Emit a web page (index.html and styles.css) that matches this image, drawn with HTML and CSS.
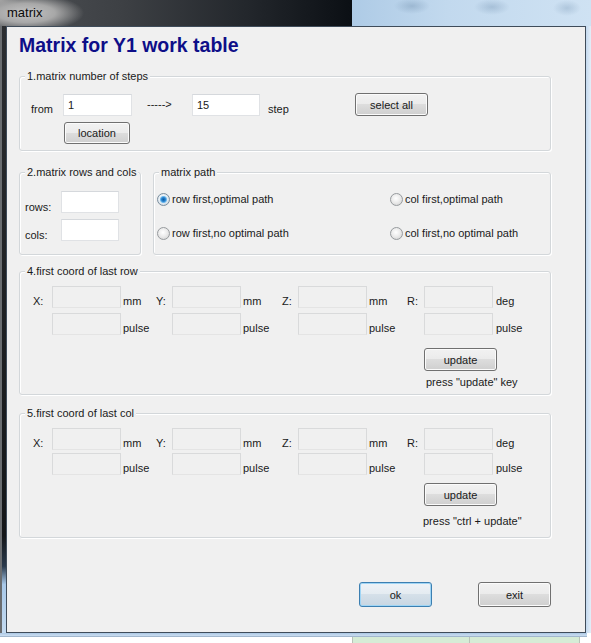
FILE: index.html
```html
<!DOCTYPE html>
<html>
<head>
<meta charset="utf-8">
<title>matrix</title>
<link rel="stylesheet" href="styles.css">
</head>
<body>
<div class="screen">
  <div class="titlebar">
    <div class="glass"><span class="caption">matrix</span></div>
    <div class="desk-top"></div>
  </div>
  <div class="mid">
    <div class="frame-left"></div>
    <div class="client">
      <h1 class="heading">Matrix for Y1 work table</h1>

      <section class="group g-steps">
        <div class="group-title">1.matrix number of steps</div>
        <div class="steps-row">
          <span class="lbl lbl-from">from</span>
          <input class="edit edit-from" value="1">
          <span class="lbl lbl-arrow">-----&gt;</span>
          <input class="edit edit-to" value="15">
          <span class="lbl lbl-step">step</span>
          <button class="btn btn-select">select all</button>
        </div>
        <button class="btn btn-location">location</button>
      </section>

      <div class="group-pair">
        <section class="group g-rc">
          <div class="group-title">2.matrix rows and cols</div>
          <div class="rc-row"><span class="lbl lbl-rc">rows:</span><input class="edit edit-rc"></div>
          <div class="rc-row"><span class="lbl lbl-rc">cols:</span><input class="edit edit-rc"></div>
        </section>
        <section class="group g-path">
          <div class="group-title">matrix path</div>
          <div class="radios">
            <label class="radio-item"><span class="radio on"></span>row first,optimal path</label>
            <label class="radio-item"><span class="radio"></span>col first,optimal path</label>
            <label class="radio-item"><span class="radio"></span>row first,no optimal path</label>
            <label class="radio-item"><span class="radio"></span>col first,no optimal path</label>
          </div>
        </section>
      </div>

      <section class="group g-coord">
        <div class="group-title">4.first coord of last row</div>
        <div class="coord-grid">
          <span class="lbl">X:</span><input class="edit" disabled><span class="lbl unit">mm</span>
          <span class="lbl">Y:</span><input class="edit" disabled><span class="lbl unit">mm</span>
          <span class="lbl">Z:</span><input class="edit" disabled><span class="lbl unit">mm</span>
          <span class="lbl">R:</span><input class="edit" disabled><span class="lbl unit unit-deg">deg</span>
          <span></span><input class="edit" disabled><span class="lbl unit">pulse</span>
          <span></span><input class="edit" disabled><span class="lbl unit">pulse</span>
          <span></span><input class="edit" disabled><span class="lbl unit">pulse</span>
          <span></span><input class="edit" disabled><span class="lbl unit unit-deg">pulse</span>
        </div>
        <button class="btn btn-update">update</button>
        <div class="hint">press "update" key</div>
      </section>

      <section class="group g-coord g-col">
        <div class="group-title">5.first coord of last col</div>
        <div class="coord-grid">
          <span class="lbl">X:</span><input class="edit" disabled><span class="lbl unit">mm</span>
          <span class="lbl">Y:</span><input class="edit" disabled><span class="lbl unit">mm</span>
          <span class="lbl">Z:</span><input class="edit" disabled><span class="lbl unit">mm</span>
          <span class="lbl">R:</span><input class="edit" disabled><span class="lbl unit unit-deg">deg</span>
          <span></span><input class="edit" disabled><span class="lbl unit">pulse</span>
          <span></span><input class="edit" disabled><span class="lbl unit">pulse</span>
          <span></span><input class="edit" disabled><span class="lbl unit">pulse</span>
          <span></span><input class="edit" disabled><span class="lbl unit unit-deg">pulse</span>
        </div>
        <button class="btn btn-update">update</button>
        <div class="hint">press "ctrl + update"</div>
      </section>

      <div class="actions">
        <button class="btn btn-ok">ok</button>
        <button class="btn btn-exit">exit</button>
      </div>
    </div>
    <div class="frame-right"></div>
  </div>
  <div class="frame-bottom"></div>
  <div class="desk-bottom">
    <span class="cell cell-a"></span><span class="cell cell-b"></span>
  </div>
</div>
</body>
</html>
```

FILE: styles.css
```css
* { box-sizing: border-box; }
html, body { margin: 0; padding: 0; }
body {
  width: 591px;
  height: 643px;
  overflow: hidden;
  background: #ffffff;
  font-family: "Liberation Sans", Arial, sans-serif;
  font-size: 11px;
  color: #1a1a1a;
}
.screen { display: flex; flex-direction: column; width: 591px; height: 643px; }

/* title bar (Aero glass) */
.titlebar { display: flex; height: 26px; flex: none; }
.glass {
  width: 352px;
  display: flex;
  align-items: center;
  padding-left: 7px;
  background:
    radial-gradient(ellipse 58px 19px at 26px 13px, #c4c4c4 0%, #a8a8a8 50%, rgba(110,110,110,0) 100%),
    radial-gradient(ellipse 20px 14px at 0 0, #a0a0a0 0%, rgba(120,120,120,0) 100%),
    linear-gradient(90deg, #4e5155 0%, #3d4044 35%, #23272c 70%, #0b0f14 100%);
}
.caption { font-size: 13px; line-height: 16px; color: #0a0a0a; }
.desk-top {
  flex: 1;
  background:
    radial-gradient(ellipse 18px 8px at 60px 6px, rgba(120,150,180,.45), rgba(120,150,180,0)),
    radial-gradient(ellipse 18px 8px at 140px 7px, rgba(120,150,180,.4), rgba(120,150,180,0)),
    radial-gradient(ellipse 14px 8px at 215px 8px, rgba(120,150,180,.35), rgba(120,150,180,0)),
    linear-gradient(90deg, #aecbe6 0%, #c2d9ee 40%, #cfe2f3 100%);
}

/* window body */
.mid { display: flex; height: 607px; flex: none; }
.frame-left {
  width: 6px;
  border-left: 2px solid #6a6d70;
  background: linear-gradient(180deg, #2c2e31 0%, #141618 84%, #2a3a4c 89%, #a8c8e8 92%, #c4dbf1 100%);
}
.client {
  width: 580px;
  border: 1px solid #3f4c5a;
  background: #f0f0f0;
  padding: 7px 0 0 12px;
}
.frame-right { width: 5px; background: linear-gradient(90deg, #c3d9ef, #e4eef8); }
.frame-bottom {
  width: 587px;
  height: 4px;
  flex: none;
  background: linear-gradient(180deg, #a9c6e3, #c9ddf1 60%, #8fa6be);
}
.desk-bottom { height: 6px; flex: none; display: flex; padding-left: 352px; background: #fff; }
.cell { height: 6px; background: #d6ecd6; border-left: 1px solid #b9c2b9; }
.cell-a { width: 117px; }
.cell-b { width: 111px; border-right: 1px solid #b9c2b9; }

.heading {
  margin: 0;
  font: bold 19.5px/22px "Liberation Sans", Arial, sans-serif;
  color: #0e0e88;
}

/* group boxes */
.group {
  width: 532px;
  border: 1px solid #d3d7da;
  border-radius: 3px;
  box-shadow: inset 1px 1px 0 #ffffff, 1px 1px 0 #ffffff;
}
.group-title {
  width: fit-content;
  height: 13px;
  margin: -7px 0 0 5px;
  padding: 0 2px;
  line-height: 13px;
  background: #f0f0f0;
  white-space: nowrap;
}
.lbl { line-height: 13px; white-space: nowrap; }

.edit {
  height: 22px;
  padding: 0 4px;
  border: 1px solid #e0e2e5;
  border-top-color: #d5d8dc;
  background: #ffffff;
  font: 11px "Liberation Sans", Arial, sans-serif;
  color: #1a1a1a;
  outline: none;
}
.edit:disabled { background: #f0f0f0; border-color: #d9dadb; border-bottom-color: #e4e4e4; }

.btn {
  display: block;
  padding: 0;
  font: 11px "Liberation Sans", Arial, sans-serif;
  color: #1a1a1a;
  border: 1px solid #707070;
  border-radius: 3px;
  background: linear-gradient(180deg, #f2f2f2 0%, #ebebeb 49%, #dddddd 50%, #cfcfcf 100%);
  box-shadow: inset 0 0 0 1px #fbfbfb;
}

/* group 1 */
.g-steps { margin-top: 20px; padding-bottom: 6px; }
.steps-row { display: flex; align-items: flex-start; height: 23px; margin-top: 10px; }
.lbl-from { width: 32px; margin: 10px 0 0 11px; }
.edit-from { width: 69px; margin-top: 1px; }
.lbl-arrow { width: 45px; margin: 5px 0 0 15px; }
.edit-to { width: 68px; margin-top: 1px; }
.lbl-step { width: 87px; margin: 10px 0 0 8px; }
.btn-select { width: 73px; height: 23px; }
.btn-location { width: 66px; height: 22px; margin: 6px 0 0 44px; }

/* groups 2 and path */
.group-pair { display: flex; gap: 12px; width: 532px; margin-top: 21px; }
.group-pair .group { width: auto; }
.g-rc { width: 122px !important; flex: none; padding-bottom: 13px; }
.g-path { flex: 1; }
.rc-row { display: flex; align-items: flex-start; height: 22px; margin-top: 12px; }
.rc-row + .rc-row { margin-top: 6px; }
.lbl-rc { width: 36px; margin: 10px 0 0 5px; }
.edit-rc { width: 58px; }

.radios {
  display: grid;
  grid-template-columns: 233px auto;
  row-gap: 21px;
  margin: 14px 0 0 3px;
}
.radio-item { display: flex; align-items: center; gap: 2px; height: 13px; line-height: 13px; white-space: nowrap; }
.radio {
  flex: none;
  width: 13px;
  height: 13px;
  border-radius: 50%;
  border: 1px solid #979b9e;
  background: radial-gradient(circle at 45% 40%, #ffffff 0%, #ececec 45%, #cdcdcd 100%);
}
.radio.on {
  border-color: #7a8d9c;
  background:
    radial-gradient(circle at 50% 50%, #0b5aa2 0, #2a84cf 2px, #7cc0ee 3.2px, rgba(124,192,238,0) 4px),
    radial-gradient(circle at 45% 40%, #ffffff 0%, #e6eef4 45%, #c3ced8 100%);
}

/* coordinate groups */
.g-coord { margin-top: 16px; padding-bottom: 5px; }
.g-col { margin-top: 18px; padding-bottom: 9px; }
.coord-grid {
  display: grid;
  grid-template-columns: 19px 69px 35px 16px 69px 41px 16px 69px 40px 17px 69px auto;
  grid-auto-rows: 22px;
  row-gap: 5px;
  margin: 8px 0 0 13px;
}
.g-col .coord-grid { row-gap: 3px; }
.coord-grid .lbl { align-self: end; }
.coord-grid .edit { width: 69px; }
.unit { padding-left: 2px; }
.unit-deg { padding-left: 3px; }
.btn-update { width: 73px; height: 23px; margin: 13px 0 0 404px; }
.g-col .btn-update { margin-top: 8px; }
.hint { line-height: 13px; margin: 5px 0 0 406px; white-space: nowrap; }
.g-col .hint { margin: 9px 0 0 403px; }

/* dialog buttons */
.actions { display: flex; justify-content: flex-end; gap: 46px; width: 532px; margin-top: 44px; }
.btn-ok, .btn-exit { width: 73px; height: 25px; }
.btn-ok {
  border-color: #3c7fb1;
  box-shadow: inset 0 0 0 1px #9fd5f5;
  background: linear-gradient(180deg, #eef3f7 0%, #e4ebf1 49%, #d5e0e9 50%, #c8d6e2 100%);
}
```
